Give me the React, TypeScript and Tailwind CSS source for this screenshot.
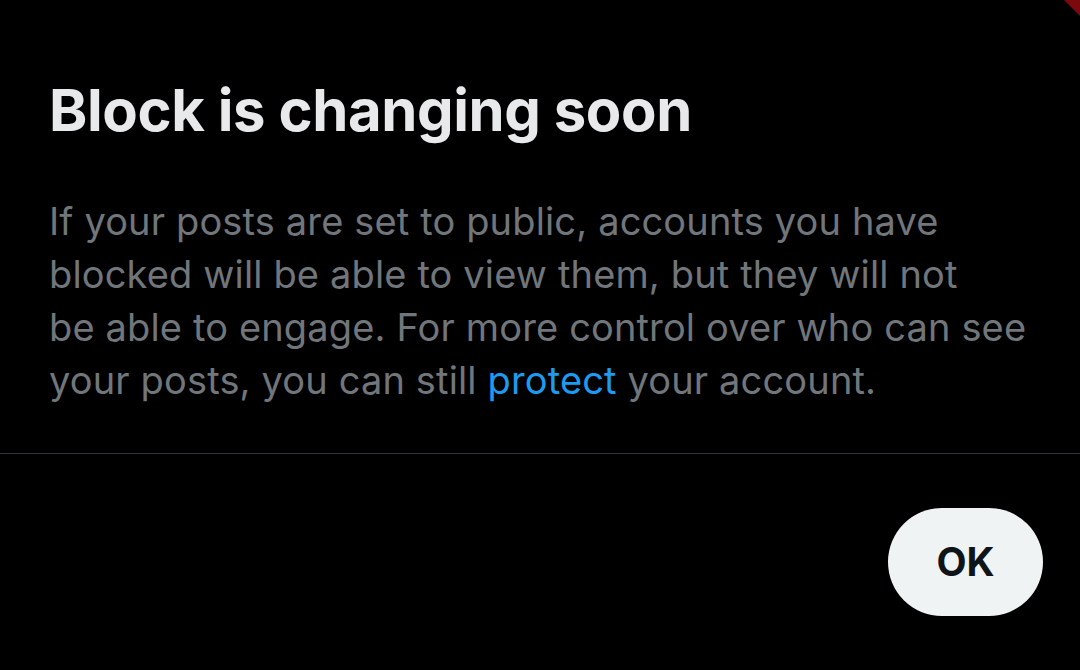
export default function App() {
  return (
    <div className="relative w-[1080px] h-[670px] bg-black overflow-hidden" style={{ fontFamily: "Inter, 'Noto Sans', sans-serif" }}>
      {/* red corner peeking behind */}
      <div className="absolute top-0 right-0 w-[16px] h-[16px] bg-[#7a0a0e] [clip-path:polygon(0_0,100%_0,100%_100%)]" />

      <div className="px-[49px] pt-[78px]">
        <h1 className="text-[58px] font-bold leading-[64px] text-[#e7e9ea] tracking-[-0.4px]">
          Block is changing soon
        </h1>
        <p className="mt-[53px] text-[38px] leading-[53px] text-[#71767b] whitespace-nowrap tracking-[0.15px]">
          If your posts are set to public, accounts you have
          <br />
          blocked will be able to view them, but they will not
          <br />
          be able to engage. For more control over who can see
          <br />
          your posts, you can still <span className="text-[#1d9bf0]">protect</span> your account.
        </p>
      </div>

      <div className="mt-[46px] border-t border-[#2f3336]" />

      <div className="flex justify-end pr-[37px] pt-[54px]">
        <button className="w-[155px] h-[108px] rounded-full bg-[#eff3f4] text-[#0f1419] text-[39px] font-bold">
          OK
        </button>
      </div>
    </div>
  );
}
